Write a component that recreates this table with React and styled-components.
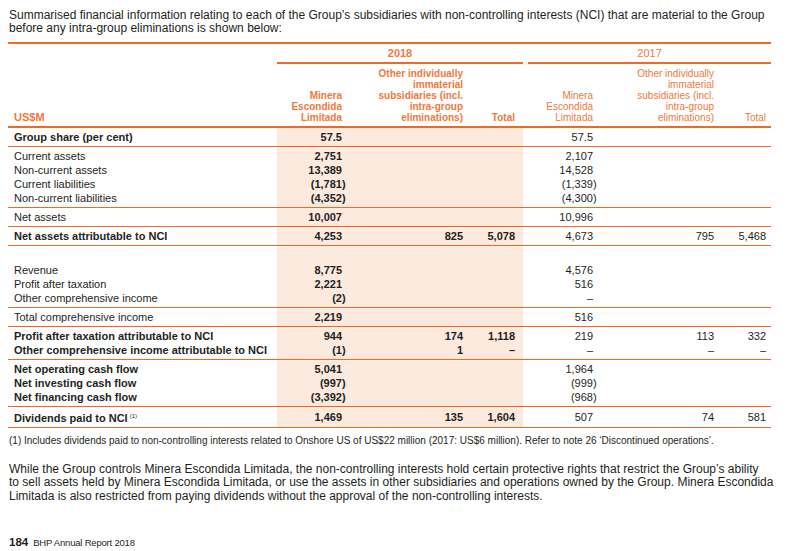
import React from 'react'
import styled, { createGlobalStyle } from 'styled-components'

const ORANGE = '#ee6a28'
const HEAD = '#f0783a'
const SHADE = '#fdeadf'
const INK = '#231f20'

const GlobalStyle = createGlobalStyle`
    html, body {
        margin: 0;
        padding: 0;
        background: #ffffff;
    }
    body {
        font-family: "Liberation Sans", Arial, sans-serif;
        color: ${INK};
    }
`

const Page = styled.div`
    width: 795px;
    height: 551px;
    box-sizing: border-box;
    padding: 9px 24px 0 9px;
    display: flex;
    flex-direction: column;
`

const Intro = styled.p`
    margin: 0;
    font-size: 12px;
    line-height: 13px;
`

const Table = styled.table`
    margin: 7px 0 0 -1px;
    width: 763px;
    table-layout: fixed;
    border-collapse: collapse;
    font-size: 11px;
    border-top: 2px solid ${ORANGE};

    tbody tr:first-child td {
        padding-top: 2px;
    }
    tbody tr:last-child td {
        padding-bottom: 2px;
    }
`

const Group = styled.tbody`
    border-bottom: 1px solid ${ORANGE};
`

const HeadRow = styled.tr`
    border-bottom: ${p => (p.$last ? `2px solid ${ORANGE}` : 'none')};
`

const YearCell = styled.th`
    height: 18px;
    padding: 0;
    text-align: center;
    font-size: 11px;
    font-weight: ${p => (p.$bold ? 700 : 400)};
    color: ${HEAD};
    border-bottom: ${p => (p.$line ? `2px solid ${ORANGE}` : 'none')};
`

const ColHead = styled.th`
    height: 59px;
    padding: 0 ${p => p.$pad ?? 8}px 3px 0;
    vertical-align: bottom;
    text-align: right;
    font-size: 10px;
    line-height: 11px;
    font-weight: ${p => (p.$bold ? 700 : 400)};
    color: ${HEAD};
`

const UnitHead = styled(ColHead)`
    text-align: left;
    padding-left: 6px;
    font-size: 11px;
`

const Label = styled.td`
    padding: 0 0 0 6px;
    line-height: 14px;
    font-weight: ${p => (p.$bold ? 700 : 400)};
    white-space: nowrap;
`

const Value = styled.td`
    padding: 0 ${p => p.$pad ?? 8}px 0 0;
    line-height: 14px;
    text-align: right;
    white-space: nowrap;
    font-weight: ${p => (p.$bold ? 700 : 400)};
    background: ${p => (p.$shade ? SHADE : 'transparent')};
`

const Spacer = styled.td`
    padding: 0;
`

const BlankRow = styled.tr`
    height: 17px;
`

const Paren = styled.span`
    margin-right: -0.33em;
`

const Sup = styled.sup`
    font-size: 6px;
    font-weight: 400;
    vertical-align: 4px;
    margin-left: 2px;
`

const Footnote = styled.p`
    margin: 7px 0 0 0;
    font-size: 10px;
    line-height: 12px;
`

const Body = styled.p`
    margin: 16px 0 0 0;
    font-size: 12px;
    line-height: 13.5px;
    white-space: nowrap;
`

const Footer = styled.div`
    margin-top: auto;
    margin-bottom: 3px;
    display: flex;
    align-items: baseline;
    gap: 5px;
`

const PageNo = styled.span`
    font-size: 11.5px;
    font-weight: 700;
`

const Report = styled.span`
    font-size: 9.5px;
    letter-spacing: -0.2px;
`

const PADS = [8, 8, 8, 8, 8, 5]

const groups = [
    [{ label: 'Group share (per cent)', bold: true, v: ['57.5', '', '', '57.5', '', ''] }],
    [
        { label: 'Current assets', v: ['2,751', '', '', '2,107', '', ''] },
        { label: 'Non-current assets', v: ['13,389', '', '', '14,528', '', ''] },
        { label: 'Current liabilities', v: ['(1,781)', '', '', '(1,339)', '', ''] },
        { label: 'Non-current liabilities', v: ['(4,352)', '', '', '(4,300)', '', ''] },
    ],
    [{ label: 'Net assets', v: ['10,007', '', '', '10,996', '', ''] }],
    [{ label: 'Net assets attributable to NCI', bold: true, v: ['4,253', '825', '5,078', '4,673', '795', '5,468'] }],
    [
        { blank: true },
        { label: 'Revenue', v: ['8,775', '', '', '4,576', '', ''] },
        { label: 'Profit after taxation', v: ['2,221', '', '', '516', '', ''] },
        { label: 'Other comprehensive income', v: ['(2)', '', '', '–', '', ''] },
    ],
    [{ label: 'Total comprehensive income', v: ['2,219', '', '', '516', '', ''] }],
    [
        { label: 'Profit after taxation attributable to NCI', bold: true, v: ['944', '174', '1,118', '219', '113', '332'] },
        { label: 'Other comprehensive income attributable to NCI', bold: true, v: ['(1)', '1', '–', '–', '–', '–'] },
    ],
    [
        { label: 'Net operating cash flow', bold: true, v: ['5,041', '', '', '1,964', '', ''] },
        { label: 'Net investing cash flow', bold: true, v: ['(997)', '', '', '(999)', '', ''] },
        { label: 'Net financing cash flow', bold: true, v: ['(3,392)', '', '', '(968)', '', ''] },
    ],
    [{ label: 'Dividends paid to NCI', note: '(1)', bold: true, v: ['1,469', '135', '1,604', '507', '74', '581'] }],
]

const Num = ({ text }) => {
    if (text.endsWith(')')) {
        return <>{text.slice(0, -1)}<Paren>)</Paren></>
    }
    return text
}

const Row = ({ row }) => {
    if (row.blank) {
        return (
            <BlankRow>
                <Label />
                <Value $shade /><Value $shade /><Value $shade />
                <Spacer />
                <Value /><Value /><Value />
            </BlankRow>
        )
    }
    const cells = row.v.map((t, i) => (
        <Value key={i} $bold={i < 3} $shade={i < 3} $pad={PADS[i]}>
            <Num text={t} />
        </Value>
    ))
    return (
        <tr>
            <Label $bold={row.bold}>
                {row.label}
                {row.note && <Sup>{row.note}</Sup>}
            </Label>
            {cells.slice(0, 3)}
            <Spacer />
            {cells.slice(3)}
        </tr>
    )
}

const App = () => (
    <Page>
        <GlobalStyle />
        <Intro>
            Summarised financial information relating to each of the Group’s subsidiaries with non-controlling interests (NCI) that are material to the Group
            before any intra-group eliminations is shown below:
        </Intro>
        <Table>
            <colgroup>
                <col style={{ width: 269 }} />
                <col style={{ width: 73 }} />
                <col style={{ width: 121 }} />
                <col style={{ width: 52 }} />
                <col style={{ width: 5 }} />
                <col style={{ width: 73 }} />
                <col style={{ width: 121 }} />
                <col style={{ width: 49 }} />
            </colgroup>
            <thead>
                <HeadRow>
                    <YearCell />
                    <YearCell colSpan={3} $bold $line>2018</YearCell>
                    <YearCell />
                    <YearCell colSpan={3} $line>2017</YearCell>
                </HeadRow>
                <HeadRow $last>
                    <UnitHead $bold>US$M</UnitHead>
                    <ColHead $bold>Minera<br />Escondida<br />Limitada</ColHead>
                    <ColHead $bold>Other individually<br />immaterial<br />subsidiaries (incl.<br />intra-group<br />eliminations)</ColHead>
                    <ColHead $bold>Total</ColHead>
                    <ColHead $pad={0} />
                    <ColHead>Minera<br />Escondida<br />Limitada</ColHead>
                    <ColHead>Other individually<br />immaterial<br />subsidiaries (incl.<br />intra-group<br />eliminations)</ColHead>
                    <ColHead $pad={5}>Total</ColHead>
                </HeadRow>
            </thead>
            {groups.map((g, gi) => (
                <Group key={gi}>
                    {g.map((row, ri) => <Row key={ri} row={row} />)}
                </Group>
            ))}
        </Table>
        <Footnote>
            (1) Includes dividends paid to non-controlling interests related to Onshore US of US$22 million (2017: US$6 million). Refer to note 26 ‘Discontinued operations’.
        </Footnote>
        <Body>
            While the Group controls Minera Escondida Limitada, the non-controlling interests hold certain protective rights that restrict the Group’s ability<br />
            to sell assets held by Minera Escondida Limitada, or use the assets in other subsidiaries and operations owned by the Group. Minera Escondida<br />
            Limitada is also restricted from paying dividends without the approval of the non-controlling interests.
        </Body>
        <Footer>
            <PageNo>184</PageNo>
            <Report>BHP Annual Report 2018</Report>
        </Footer>
    </Page>
)

export default App
